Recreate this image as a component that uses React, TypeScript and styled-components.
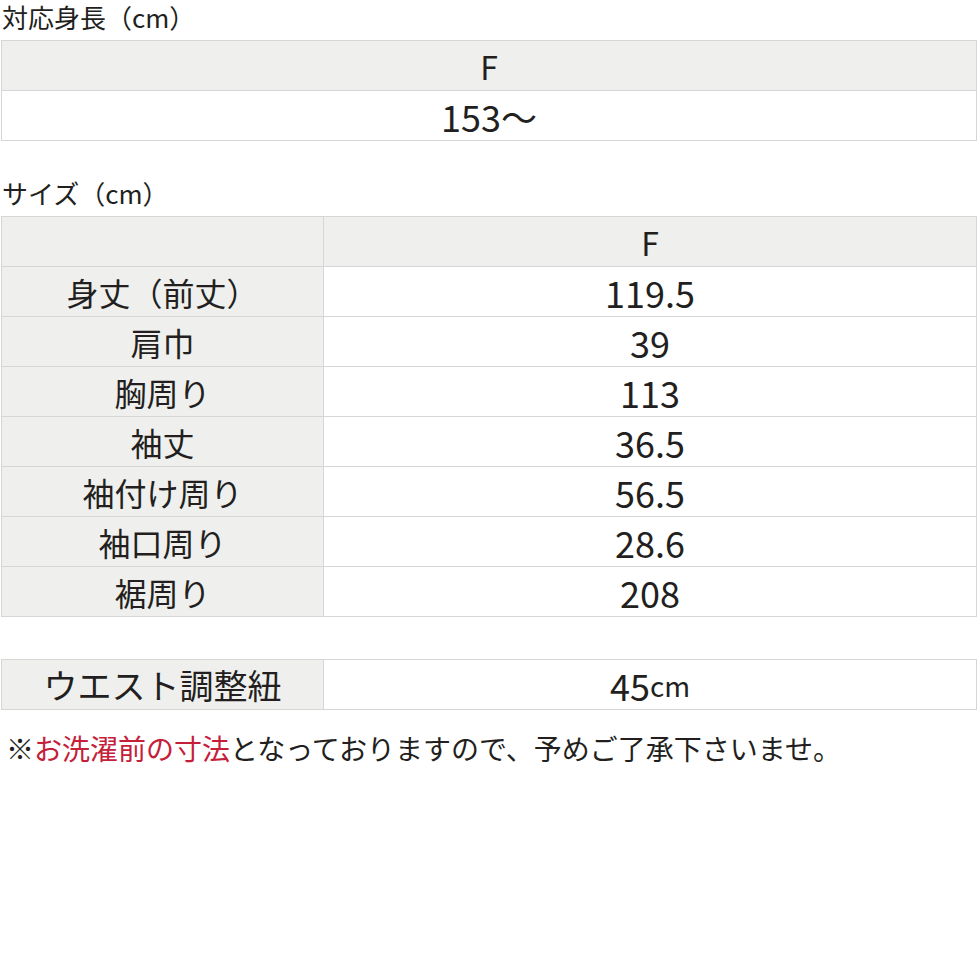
import React from 'react';
import styled, { createGlobalStyle } from 'styled-components';

const GlobalStyle = createGlobalStyle`
  body {
    margin: 0;
    background: #fff;
    font-family: "Noto Sans CJK JP", "Noto Sans", sans-serif;
    color: #231f20;
  }
`;

const sizeRows: [string, string][] = [
  ['身丈（前丈）', '119.5'],
  ['肩巾', '39'],
  ['胸周り', '113'],
  ['袖丈', '36.5'],
  ['袖付け周り', '56.5'],
  ['袖口周り', '28.6'],
  ['裾周り', '208'],
];

const App: React.FC = () => {
  return (
    <Page>
      <GlobalStyle />
      <Title>対応身長（cm）</Title>
      <Table $cols="1fr">
        <Cell $shade>F</Cell>
        <Cell $num>153～</Cell>
      </Table>

      <Title $top={35}>サイズ（cm）</Title>
      <Table $cols="321px 1fr">
        <Cell $shade />
        <Cell $shade>F</Cell>
        {sizeRows.map(([label, value]) => (
          <React.Fragment key={label}>
            <Cell $shade>{label}</Cell>
            <Cell $num>{value}</Cell>
          </React.Fragment>
        ))}
      </Table>

      <Table $cols="321px 1fr" $top={42}>
        <Cell $shade $big>ウエスト調整紐</Cell>
        <Cell $num>
          45<Unit>cm</Unit>
        </Cell>
      </Table>

      <Note>
        ※<Red>お洗濯前の寸法</Red>となっておりますので、予めご了承下さいませ。
      </Note>
    </Page>
  );
};

export default App;

const Page = styled.div`
  width: 980px;
  height: 980px;
  background: #fff;
`;

const Title = styled.div<{ $top?: number }>`
  margin-top: ${(p) => p.$top ?? 0}px;
  margin-bottom: 8px;
  padding: 2px 0 0 2px;
  font-size: 26px;
  line-height: 30px;
  color: #231f20;
`;

const Table = styled.div<{ $cols: string; $top?: number }>`
  display: grid;
  grid-template-columns: ${(p) => p.$cols};
  grid-auto-rows: 49px;
  gap: 1px;
  padding: 1px;
  margin-top: ${(p) => p.$top ?? 0}px;
  margin-left: 1px;
  width: 976px;
  box-sizing: border-box;
  background: #d6d6d6;
`;

const Cell = styled.div<{ $shade?: boolean; $num?: boolean; $big?: boolean }>`
  display: flex;
  align-items: center;
  justify-content: center;
  background: ${(p) => (p.$shade ? '#efefed' : '#fff')};
  font-size: ${(p) => (p.$num ? 36 : p.$big ? 34 : 32)}px;
  line-height: 1;
  color: #231f20;
`;

const Unit = styled.span`
  font-size: 28px;
`;

const Note = styled.div`
  margin-top: 22px;
  padding-left: 6px;
  font-size: 28px;
  line-height: 32px;
  color: #231f20;
  white-space: nowrap;
`;

const Red = styled.span`
  color: #c4203a;
`;
